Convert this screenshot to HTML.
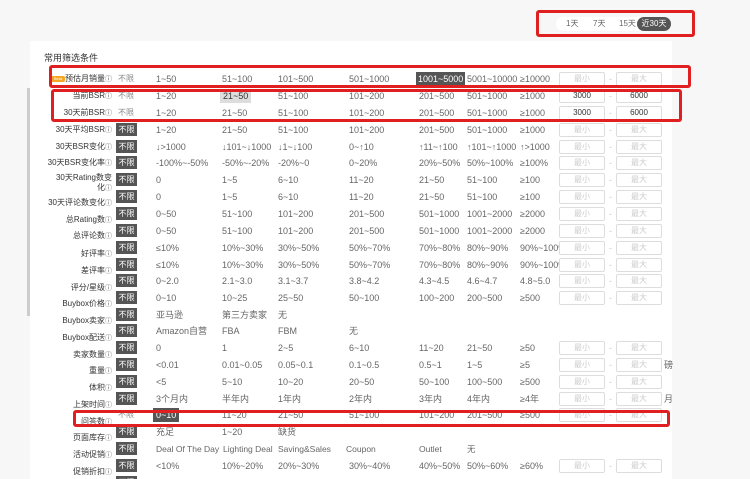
<!DOCTYPE html>
<html><head><meta charset="utf-8"><style>
*{margin:0;padding:0;box-sizing:border-box}
html,body{width:750px;height:479px;overflow:hidden}
body{background:#f7f7f7;font-family:"Liberation Sans","Noto Sans CJK SC",sans-serif;font-size:8px;color:#666;position:relative}
.panel{position:absolute;left:30px;top:41px;width:642px;height:438px;background:#fff}
.sb{position:absolute;left:27px;top:88px;width:3px;height:228px;background:#ccc}
.r{position:absolute;left:0;width:750px;height:14px;line-height:14px;font-size:9px}
.r span{position:absolute;white-space:nowrap}
.lb{position:absolute;right:638px;white-space:nowrap;color:#333;font-size:8px;height:14px;line-height:14px}
.lb i{font-style:normal;font-size:7px;color:#555}
.bx{left:116px;width:21px;height:13px;line-height:13px;background:#555;color:#fff;text-align:center;top:0;font-size:8px}
.pl{left:118px;color:#888;font-size:8px}
.in{width:46px;height:14px;border:1px solid #ddd;border-radius:2px;text-align:center;color:#ccc;line-height:12px;font-size:8px}
.mn{left:559px}.mx{left:616px}.ds{left:609px;color:#ccc}
.v{color:#333}
.red{position:absolute;border:3px solid #e02020;border-radius:3px}
</style></head><body>
<div class="panel"></div>
<div class="sb"></div>
<div style="position:absolute;left:556px;top:17px;width:115px;height:14px;background:#fff;border-radius:7px"></div>
<div style="position:absolute;left:566px;top:17px;line-height:14px;font-size:8px">1天</div>
<div style="position:absolute;left:593px;top:17px;line-height:14px;font-size:8px">7天</div>
<div style="position:absolute;left:619px;top:17px;line-height:14px;font-size:8px">15天</div>
<div style="position:absolute;left:637px;top:17px;width:34px;height:14px;line-height:14px;background:#555;color:#fff;border-radius:7px;text-align:center;font-size:8px">近30天</div>
<div style="position:absolute;left:44px;top:51px;font-size:9px;color:#333">常用筛选条件</div>
<div style="position:absolute;left:51px;top:76px;width:14px;height:6px;background:#f5a623;border-radius:2px;font-size:4px;color:#fff;line-height:6px;text-align:center">Beta</div>

<div class="lb" style="top:72px">预估月销量<i>ⓘ</i></div>
<div class="lb" style="top:89px">当前BSR<i>ⓘ</i></div>
<div class="lb" style="top:106px">30天前BSR<i>ⓘ</i></div>
<div class="lb" style="top:123px">30天平均BSR<i>ⓘ</i></div>
<div class="lb" style="top:140px">30天BSR变化<i>ⓘ</i></div>
<div class="lb" style="top:156px">30天BSR变化率<i>ⓘ</i></div>
<div class="lb" style="top:171px">30天Rating数变</div>
<div class="lb" style="top:181px">化<i>ⓘ</i></div>
<div class="lb" style="top:196px">30天评论数变化<i>ⓘ</i></div>
<div class="lb" style="top:213px">总Rating数<i>ⓘ</i></div>
<div class="lb" style="top:229px">总评论数<i>ⓘ</i></div>
<div class="lb" style="top:247px">好评率<i>ⓘ</i></div>
<div class="lb" style="top:264px">差评率<i>ⓘ</i></div>
<div class="lb" style="top:281px">评分/星级<i>ⓘ</i></div>
<div class="lb" style="top:297px">Buybox价格<i>ⓘ</i></div>
<div class="lb" style="top:314px">Buybox卖家<i>ⓘ</i></div>
<div class="lb" style="top:331px">Buybox配送<i>ⓘ</i></div>
<div class="lb" style="top:348px">卖家数量<i>ⓘ</i></div>
<div class="lb" style="top:364px">重量<i>ⓘ</i></div>
<div class="lb" style="top:381px">体积<i>ⓘ</i></div>
<div class="lb" style="top:398px">上架时间<i>ⓘ</i></div>
<div class="lb" style="top:415px">问答数<i>ⓘ</i></div>
<div class="lb" style="top:431px">页面库存<i>ⓘ</i></div>
<div class="lb" style="top:448px">活动促销<i>ⓘ</i></div>
<div class="lb" style="top:465px">促销折扣<i>ⓘ</i></div>

<div class="r" style="top:72px"><span class="pl">不限</span><span style="left:156px">1~50</span><span style="left:222px">51~100</span><span style="left:278px">101~500</span><span style="left:349px">501~1000</span><span style="left:416px;background:#555;color:#fff;padding:0 2px">1001~5000</span><span style="left:467px">5001~10000</span><span style="left:520px">≥10000</span><span class="in mn">最小</span><span class="ds">-</span><span class="in mx">最大</span></div>
<div class="r" style="top:89px"><span class="pl">不限</span><span style="left:156px">1~20</span><span style="left:220px;background:#ddd;padding:0 3px;color:#333">21~50</span><span style="left:278px">51~100</span><span style="left:349px">101~200</span><span style="left:419px">201~500</span><span style="left:467px">501~1000</span><span style="left:520px">≥1000</span><span class="in mn v">3000</span><span class="ds">-</span><span class="in mx v">6000</span></div>
<div class="r" style="top:106px"><span class="pl">不限</span><span style="left:156px">1~20</span><span style="left:222px">21~50</span><span style="left:278px">51~100</span><span style="left:349px">101~200</span><span style="left:419px">201~500</span><span style="left:467px">501~1000</span><span style="left:520px">≥1000</span><span class="in mn v">3000</span><span class="ds">-</span><span class="in mx v">6000</span></div>
<div class="r" style="top:123px"><span class="bx">不限</span><span style="left:156px">1~20</span><span style="left:222px">21~50</span><span style="left:278px">51~100</span><span style="left:349px">101~200</span><span style="left:419px">201~500</span><span style="left:467px">501~1000</span><span style="left:520px">≥1000</span><span class="in mn">最小</span><span class="ds">-</span><span class="in mx">最大</span></div>
<div class="r" style="top:140px"><span class="bx">不限</span><span style="left:156px">↓>1000</span><span style="left:222px">↓101~↓1000</span><span style="left:278px">↓1~↓100</span><span style="left:349px">0~↑10</span><span style="left:419px">↑11~↑100</span><span style="left:467px">↑101~↑1000</span><span style="left:520px">↑>1000</span><span class="in mn">最小</span><span class="ds">-</span><span class="in mx">最大</span></div>
<div class="r" style="top:156px"><span class="bx">不限</span><span style="left:156px">-100%~-50%</span><span style="left:222px">-50%~-20%</span><span style="left:278px">-20%~0</span><span style="left:349px">0~20%</span><span style="left:419px">20%~50%</span><span style="left:467px">50%~100%</span><span style="left:520px">≥100%</span><span class="in mn">最小</span><span class="ds">-</span><span class="in mx">最大</span></div>
<div class="r" style="top:173px"><span class="bx">不限</span><span style="left:156px">0</span><span style="left:222px">1~5</span><span style="left:278px">6~10</span><span style="left:349px">11~20</span><span style="left:419px">21~50</span><span style="left:467px">51~100</span><span style="left:520px">≥100</span><span class="in mn">最小</span><span class="ds">-</span><span class="in mx">最大</span></div>
<div class="r" style="top:190px"><span class="bx">不限</span><span style="left:156px">0</span><span style="left:222px">1~5</span><span style="left:278px">6~10</span><span style="left:349px">11~20</span><span style="left:419px">21~50</span><span style="left:467px">51~100</span><span style="left:520px">≥100</span><span class="in mn">最小</span><span class="ds">-</span><span class="in mx">最大</span></div>
<div class="r" style="top:207px"><span class="bx">不限</span><span style="left:156px">0~50</span><span style="left:222px">51~100</span><span style="left:278px">101~200</span><span style="left:349px">201~500</span><span style="left:419px">501~1000</span><span style="left:467px">1001~2000</span><span style="left:520px">≥2000</span><span class="in mn">最小</span><span class="ds">-</span><span class="in mx">最大</span></div>
<div class="r" style="top:224px"><span class="bx">不限</span><span style="left:156px">0~50</span><span style="left:222px">51~100</span><span style="left:278px">101~200</span><span style="left:349px">201~500</span><span style="left:419px">501~1000</span><span style="left:467px">1001~2000</span><span style="left:520px">≥2000</span><span class="in mn">最小</span><span class="ds">-</span><span class="in mx">最大</span></div>
<div class="r" style="top:241px"><span class="bx">不限</span><span style="left:156px">≤10%</span><span style="left:222px">10%~30%</span><span style="left:278px">30%~50%</span><span style="left:349px">50%~70%</span><span style="left:419px">70%~80%</span><span style="left:467px">80%~90%</span><span style="left:520px">90%~100%</span><span class="in mn" style="background:#fff">最小</span><span class="ds">-</span><span class="in mx">最大</span></div>
<div class="r" style="top:258px"><span class="bx">不限</span><span style="left:156px">≤10%</span><span style="left:222px">10%~30%</span><span style="left:278px">30%~50%</span><span style="left:349px">50%~70%</span><span style="left:419px">70%~80%</span><span style="left:467px">80%~90%</span><span style="left:520px">90%~100%</span><span class="in mn" style="background:#fff">最小</span><span class="ds">-</span><span class="in mx">最大</span></div>
<div class="r" style="top:274px"><span class="bx">不限</span><span style="left:156px">0~2.0</span><span style="left:222px">2.1~3.0</span><span style="left:278px">3.1~3.7</span><span style="left:349px">3.8~4.2</span><span style="left:419px">4.3~4.5</span><span style="left:467px">4.6~4.7</span><span style="left:520px">4.8~5.0</span><span class="in mn">最小</span><span class="ds">-</span><span class="in mx">最大</span></div>
<div class="r" style="top:291px"><span class="bx">不限</span><span style="left:156px">0~10</span><span style="left:222px">10~25</span><span style="left:278px">25~50</span><span style="left:349px">50~100</span><span style="left:419px">100~200</span><span style="left:467px">200~500</span><span style="left:520px">≥500</span><span class="in mn">最小</span><span class="ds">-</span><span class="in mx">最大</span></div>
<div class="r" style="top:308px"><span class="bx">不限</span><span style="left:156px">亚马逊</span><span style="left:222px">第三方卖家</span><span style="left:278px">无</span></div>
<div class="r" style="top:324px"><span class="bx">不限</span><span style="left:156px">Amazon自营</span><span style="left:222px">FBA</span><span style="left:278px">FBM</span><span style="left:349px">无</span></div>
<div class="r" style="top:341px"><span class="bx">不限</span><span style="left:156px">0</span><span style="left:222px">1</span><span style="left:278px">2~5</span><span style="left:349px">6~10</span><span style="left:419px">11~20</span><span style="left:467px">21~50</span><span style="left:520px">≥50</span><span class="in mn">最小</span><span class="ds">-</span><span class="in mx">最大</span></div>
<div class="r" style="top:358px"><span class="bx">不限</span><span style="left:156px">&lt;0.01</span><span style="left:222px">0.01~0.05</span><span style="left:278px">0.05~0.1</span><span style="left:349px">0.1~0.5</span><span style="left:419px">0.5~1</span><span style="left:467px">1~5</span><span style="left:520px">≥5</span><span class="in mn">最小</span><span class="ds">-</span><span class="in mx">最大</span><span style="left:664px">磅</span></div>
<div class="r" style="top:375px"><span class="bx">不限</span><span style="left:156px">&lt;5</span><span style="left:222px">5~10</span><span style="left:278px">10~20</span><span style="left:349px">20~50</span><span style="left:419px">50~100</span><span style="left:467px">100~500</span><span style="left:520px">≥500</span><span class="in mn">最小</span><span class="ds">-</span><span class="in mx">最大</span></div>
<div class="r" style="top:392px"><span class="bx">不限</span><span style="left:156px">3个月内</span><span style="left:222px">半年内</span><span style="left:278px">1年内</span><span style="left:349px">2年内</span><span style="left:419px">3年内</span><span style="left:467px">4年内</span><span style="left:520px">≥4年</span><span class="in mn">最小</span><span class="ds">-</span><span class="in mx">最大</span><span style="left:664px">月</span></div>
<div class="r" style="top:408px"><span class="pl">不限</span><span style="left:153px;background:#555;color:#fff;padding:0 3px">0~10</span><span style="left:222px">11~20</span><span style="left:278px">21~50</span><span style="left:349px">51~100</span><span style="left:419px">101~200</span><span style="left:467px">201~500</span><span style="left:520px">≥500</span><span class="in mn">最小</span><span class="ds">-</span><span class="in mx">最大</span></div>
<div class="r" style="top:425px"><span class="bx">不限</span><span style="left:156px">充足</span><span style="left:222px">1~20</span><span style="left:278px">缺货</span></div>
<div class="r" style="top:442px;font-size:8.5px"><span class="bx">不限</span><span style="left:156px">Deal Of The Day</span><span style="left:223px">Lighting Deal</span><span style="left:278px">Saving&amp;Sales</span><span style="left:346px">Coupon</span><span style="left:419px">Outlet</span><span style="left:467px">无</span></div>
<div class="r" style="top:459px"><span class="bx">不限</span><span style="left:156px">&lt;10%</span><span style="left:222px">10%~20%</span><span style="left:278px">20%~30%</span><span style="left:349px">30%~40%</span><span style="left:419px">40%~50%</span><span style="left:467px">50%~60%</span><span style="left:520px">≥60%</span><span class="in mn">最小</span><span class="ds">-</span><span class="in mx">最大</span></div>
<div class="r" style="top:476px"><span class="bx">不限</span></div>

<div class="red" style="left:536px;top:10px;width:159px;height:27px"></div>
<div class="red" style="left:49px;top:65px;width:642px;height:23px"></div>
<div class="red" style="left:51px;top:89px;width:631px;height:33px"></div>
<div class="red" style="left:73px;top:410px;width:597px;height:17px"></div>
</body></html>
